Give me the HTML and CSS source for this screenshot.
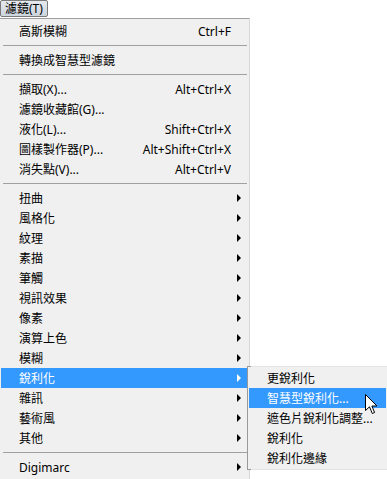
FILE: index.html
```html
<!DOCTYPE html>
<html lang="zh-Hant">
<head>
    <meta charset="UTF-8">
    <meta name="viewport" content="width=device-width, initial-scale=1.0">
    <title>濾鏡</title>
    <link rel="stylesheet" href="styles.css">
</head>
<body>
<div class="menubar">
    <div class="menubar-item">濾鏡(T)</div>
</div>
<div class="menu-area">
    <div class="menu">
        <div class="item"><span>高斯模糊</span><span class="key">Ctrl+F</span></div>
        <div class="sep"></div>
        <div class="item"><span>轉換成智慧型濾鏡</span></div>
        <div class="sep"></div>
        <div class="item"><span>擷取(X)...</span><span class="key">Alt+Ctrl+X</span></div>
        <div class="item"><span>濾鏡收藏館(G)...</span></div>
        <div class="item"><span>液化(L)...</span><span class="key">Shift+Ctrl+X</span></div>
        <div class="item"><span>圖樣製作器(P)...</span><span class="key">Alt+Shift+Ctrl+X</span></div>
        <div class="item"><span>消失點(V)...</span><span class="key">Alt+Ctrl+V</span></div>
        <div class="sep"></div>
        <div class="item sub"><span>扭曲</span></div>
        <div class="item sub"><span>風格化</span></div>
        <div class="item sub"><span>紋理</span></div>
        <div class="item sub"><span>素描</span></div>
        <div class="item sub"><span>筆觸</span></div>
        <div class="item sub"><span>視訊效果</span></div>
        <div class="item sub"><span>像素</span></div>
        <div class="item sub"><span>演算上色</span></div>
        <div class="item sub"><span>模糊</span></div>
        <div class="item sub active"><span>銳利化</span></div>
        <div class="item sub"><span>雜訊</span></div>
        <div class="item sub"><span>藝術風</span></div>
        <div class="item sub"><span>其他</span></div>
        <div class="sep"></div>
        <div class="item sub"><span>Digimarc</span></div>
    </div>

    <!-- submenu of 銳利化 -->
    <div class="submenu">
        <div class="item"><span>更銳利化</span></div>
        <div class="item active"><span>智慧型銳利化...</span></div>
        <div class="item"><span>遮色片銳利化調整...</span></div>
        <div class="item"><span>銳利化</span></div>
        <div class="item"><span>銳利化邊緣</span></div>
    </div>

    <svg class="cursor" width="13" height="21" viewBox="0 0 13 21">
        <path d="M0.5 0.5 L0.5 16.5 L4.5 12.8 L7.3 19.5 L9.6 18.5 L6.9 12 L12 12 Z" fill="#fff" stroke="#000" stroke-width="1" stroke-linejoin="miter"/>
    </svg>
</div>
</body>
</html>
```

FILE: styles.css
```css
body {
    margin: 0;
    background-color: #fff;
    font-family: "Noto Sans", "Noto Sans CJK TC", sans-serif;
    font-size: 12px;
    color: #000;
}
.menubar {
    height: 18px;
    display: flex;
    align-items: flex-start;
}
.menubar-item {
    height: 15px;
    line-height: 15px;
    padding: 0 4px;
    border: 1px solid #7a7a7a;
    border-radius: 2px;
    background: linear-gradient(#e4e9ee, #cdd5dd);
}
.menu-area {
    position: relative;
}
.menu {
    width: 247px;
    padding: 2px 1px 2px 1px;
    border-top: 1px solid #a0a0a0;
    border-right: 1px solid #d8d8d8;
    background-color: #f0f0f0;
}
.item {
    height: 20px;
    display: flex;
    align-items: center;
    justify-content: space-between;
    padding: 0 17px 0 18px;
    position: relative;
    white-space: nowrap;
}
.key {
    text-align: right;
}
.sub::after {
    content: "";
    position: absolute;
    right: 7px;
    top: 6px;
    border-left: 4px solid #000;
    border-top: 4px solid transparent;
    border-bottom: 4px solid transparent;
}
.active {
    background-color: #3399ff;
    color: #fff;
}
.sub.active::after {
    border-left-color: #fff;
}
.sep {
    height: 1px;
    margin: 4px 1px 4px 2px;
    background-color: #a0a0a0;
}
.submenu {
    position: absolute;
    left: 247px;
    top: 348px;
    width: 137px;
    padding: 1px;
    border-left: 1px solid #999;
    border-top: 1px solid #e4e4e4;
    border-bottom: 1px solid #e4e4e4;
    background-color: #f0f0f0;
}
.submenu::before,
.submenu::after {
    content: "";
    position: absolute;
    left: -1px;
    width: 4px;
    height: 1px;
    background-color: #999;
}
.submenu::before {
    top: -1px;
}
.submenu::after {
    bottom: -1px;
}
.submenu .item {
    padding: 0 4px 0 18px;
}
.cursor {
    position: absolute;
    left: 365px;
    top: 376px;
}
```
